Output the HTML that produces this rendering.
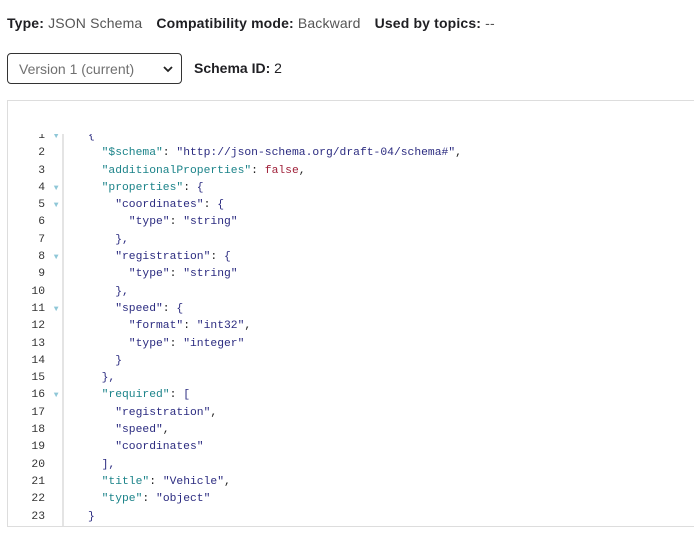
<!DOCTYPE html>
<html><head><style>
body{margin:0;width:694px;height:560px;background:#fff;font-family:"Liberation Sans",sans-serif;color:#222;position:relative;overflow:hidden}
.hdr{position:absolute;left:7px;top:15px;font-size:14px;white-space:nowrap;color:#1f1f23;letter-spacing:0.15px}
.hdr b{font-weight:bold}.hdr span{color:#555;margin-right:10px}
.sel{position:absolute;left:7px;top:53px;border:1px solid #333;border-radius:4px;box-sizing:border-box;width:175px;height:31px}
.sel .t{position:absolute;left:11px;top:7px;font-size:14px;color:#707070}
.sel svg{position:absolute;left:155px;top:12px}
.sid{position:absolute;left:194px;top:60px;font-size:14px;color:#1f1f23}
.box{position:absolute;left:7px;top:100px;width:700px;height:427px;border:1px solid #ddd;box-sizing:border-box}
.clip{position:absolute;left:8px;top:134px;width:690px;height:392px;overflow:hidden}
.gl{position:absolute;left:54px;top:0;width:2px;height:392px;background:#e4e4e4}
.code{position:absolute;left:0;top:-6px;font-family:"Liberation Mono",monospace;font-size:11.33px;line-height:17.29px;white-space:pre}
.ln{display:inline-block;width:37px;text-align:right;color:#333;margin-right:4px}
.f{display:inline-block;width:39px;color:#8fc7d7;font-size:8px;vertical-align:top}
.k{color:#1b8389}.s{color:#2b2b80}.b{color:#a0213a}.p{color:#333}
</style></head><body>
<div class="hdr"><b>Type:</b> <span>JSON Schema</span> <b>Compatibility mode:</b> <span>Backward</span> <b>Used by topics:</b> <span>--</span></div>
<div class="sel"><div class="t">Version 1 (current)</div><svg width="10" height="7" viewBox="0 0 10 7"><path d="M1 1l4 4 4-4" fill="none" stroke="#222" stroke-width="1.8"/></svg></div>
<div class="sid"><b>Schema ID:</b> 2</div>
<div class="box"></div>
<div class="clip"><div class="gl"></div><div class="code"><span class="ln">1</span><span class="f"> ▼</span><span class="s">{</span>
<span class="ln">2</span><span class="f"></span>  <span class="k">"$schema"</span>: <span class="s">"http://json-schema.org/draft-04/schema#"</span>,
<span class="ln">3</span><span class="f"></span>  <span class="k">"additionalProperties"</span>: <span class="b">false</span>,
<span class="ln">4</span><span class="f"> ▼</span>  <span class="k">"properties"</span>: <span class="s">{</span>
<span class="ln">5</span><span class="f"> ▼</span>    <span class="s">"coordinates"</span>: <span class="s">{</span>
<span class="ln">6</span><span class="f"></span>      <span class="s">"type"</span>: <span class="s">"string"</span>
<span class="ln">7</span><span class="f"></span>    <span class="s">},</span>
<span class="ln">8</span><span class="f"> ▼</span>    <span class="s">"registration"</span>: <span class="s">{</span>
<span class="ln">9</span><span class="f"></span>      <span class="s">"type"</span>: <span class="s">"string"</span>
<span class="ln">10</span><span class="f"></span>    <span class="s">},</span>
<span class="ln">11</span><span class="f"> ▼</span>    <span class="s">"speed"</span>: <span class="s">{</span>
<span class="ln">12</span><span class="f"></span>      <span class="s">"format"</span>: <span class="s">"int32"</span>,
<span class="ln">13</span><span class="f"></span>      <span class="s">"type"</span>: <span class="s">"integer"</span>
<span class="ln">14</span><span class="f"></span>    <span class="s">}</span>
<span class="ln">15</span><span class="f"></span>  <span class="s">},</span>
<span class="ln">16</span><span class="f"> ▼</span>  <span class="k">"required"</span>: <span class="s">[</span>
<span class="ln">17</span><span class="f"></span>    <span class="s">"registration"</span>,
<span class="ln">18</span><span class="f"></span>    <span class="s">"speed"</span>,
<span class="ln">19</span><span class="f"></span>    <span class="s">"coordinates"</span>
<span class="ln">20</span><span class="f"></span>  <span class="s">],</span>
<span class="ln">21</span><span class="f"></span>  <span class="k">"title"</span>: <span class="s">"Vehicle"</span>,
<span class="ln">22</span><span class="f"></span>  <span class="k">"type"</span>: <span class="s">"object"</span>
<span class="ln">23</span><span class="f"></span><span class="s">}</span></div></div>
</body></html>
